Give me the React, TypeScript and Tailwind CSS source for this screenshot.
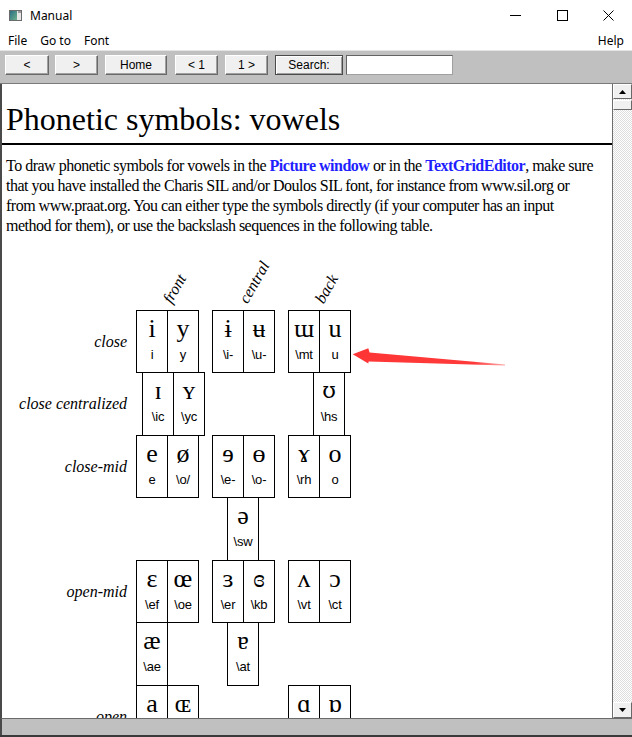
import React from 'react';

const SERIF = "font-['Liberation_Serif','DejaVu_Serif',serif]";

type CellData = [string, string];
type Group = { ml: string; cells: CellData[] } | null;
type RowData = { label: string; h: string; groups: Group[] };

const ROWS: RowData[] = [
  {
    label: 'close',
    h: 'h-[63px]',
    groups: [
      { ml: '', cells: [['i', 'i'], ['y', 'y']] },
      { ml: '', cells: [['ɨ', '\\i-'], ['ʉ', '\\u-']] },
      { ml: '', cells: [['ɯ', '\\mt'], ['u', 'u']] },
    ],
  },
  {
    label: 'close centralized',
    h: 'h-[64px]',
    groups: [
      { ml: 'ml-[6px]', cells: [['ɪ', '\\ic'], ['ʏ', '\\yc']] },
      null,
      { ml: 'ml-[25px]', cells: [['ʊ', '\\hs']] },
    ],
  },
  {
    label: 'close-mid',
    h: 'h-[63px]',
    groups: [
      { ml: '', cells: [['e', 'e'], ['ø', '\\o/']] },
      { ml: '', cells: [['ɘ', '\\e-'], ['ɵ', '\\o-']] },
      { ml: '', cells: [['ɤ', '\\rh'], ['o', 'o']] },
    ],
  },
  {
    label: '',
    h: 'h-[64px]',
    groups: [null, { ml: 'ml-[15px]', cells: [['ə', '\\sw']] }, null],
  },
  {
    label: 'open-mid',
    h: 'h-[63px]',
    groups: [
      { ml: '', cells: [['ɛ', '\\ef'], ['œ', '\\oe']] },
      { ml: '', cells: [['ɜ', '\\er'], ['ɞ', '\\kb']] },
      { ml: '', cells: [['ʌ', '\\vt'], ['ɔ', '\\ct']] },
    ],
  },
  {
    label: '',
    h: 'h-[64px]',
    groups: [
      { ml: '', cells: [['æ', '\\ae']] },
      { ml: 'ml-[15px]', cells: [['ɐ', '\\at']] },
      null,
    ],
  },
  {
    label: 'open',
    h: 'h-[63px]',
    groups: [
      { ml: '', cells: [['a', 'a'], ['ɶ', '\\Oe']] },
      null,
      { ml: '', cells: [['ɑ', '\\as'], ['ɒ', '\\ab']] },
    ],
  },
];

function Cell({ sym, code }: { sym: string; code: string }) {
  const font = sym === 'ʊ' ? "font-['DejaVu_Serif',serif] text-[22px]" : `${SERIF} text-[26px]`;
  return (
    <div className="w-[32px] h-full -ml-px first:ml-0 border border-black flex flex-col items-center">
      <div className={`mt-[3px] leading-[30px] text-black ${font}`}>{sym}</div>
      <div className="mt-[3px] text-[13px] leading-[15px] tracking-[-0.2px] text-black font-['Liberation_Sans',sans-serif]">{code}</div>
    </div>
  );
}

function ToolButton({ w, ml, children }: { w: string; ml: string; children: React.ReactNode }) {
  return (
    <div
      className={`${w} ${ml} h-[20px] shrink-0 bg-[#f0f0f0] border border-t-white border-l-white border-r-[#696969] border-b-[#696969] shadow-[inset_-1px_-1px_0_#a0a0a0] flex items-center justify-center text-[12px] text-black font-['Liberation_Sans',sans-serif]`}
    >
      {children}
    </div>
  );
}

function Arrow({ up }: { up: boolean }) {
  return (
    <svg width="7" height="4" viewBox="0 0 7 4">
      {up ? <path d="M3.5 0 L7 4 L0 4 Z" fill="#000" /> : <path d="M0 0 L7 0 L3.5 4 Z" fill="#000" />}
    </svg>
  );
}

export default function App() {
  return (
    <div className="relative w-[632px] h-[737px] overflow-hidden bg-white flex flex-col">
      {/* title bar */}
      <div className="h-[30px] shrink-0 flex items-center font-['Noto_Sans',sans-serif] text-[12px] text-black">
        <svg width="13" height="11" viewBox="0 0 13 11" className="ml-[9px]">
          <defs>
            <linearGradient id="ic" x1="0" y1="0" x2="1" y2="1">
              <stop offset="0" stopColor="#2b6f86" />
              <stop offset="1" stopColor="#6fb08a" />
            </linearGradient>
          </defs>
          <rect x="0.5" y="0.5" width="12" height="10" fill="#e6e6e6" stroke="#6b6b6b" />
          <rect x="1" y="1" width="7" height="9" fill="url(#ic)" />
          <rect x="9" y="1" width="3" height="2" fill="#9a9a9a" />
        </svg>
        <span className="ml-[8px] mt-px">Manual</span>
        <div className="ml-auto flex items-center">
          <svg width="11" height="11" viewBox="0 0 11 11" className="mr-[36px]">
            <path d="M0 5.5 H11" stroke="#000" strokeWidth="1" />
          </svg>
          <svg width="11" height="11" viewBox="0 0 11 11" className="mr-[35px]">
            <rect x="0.5" y="0.5" width="10" height="10" fill="none" stroke="#000" />
          </svg>
          <svg width="11" height="11" viewBox="0 0 11 11" className="mr-[18px]">
            <path d="M0.5 0.5 L10.5 10.5 M10.5 0.5 L0.5 10.5" stroke="#000" strokeWidth="1" />
          </svg>
        </div>
      </div>

      {/* menu bar */}
      <div className="h-[20px] shrink-0 flex items-center pt-px font-['Noto_Sans',sans-serif] text-[12px] text-black">
        <span className="ml-[8px]">File</span>
        <span className="ml-[13px]">Go to</span>
        <span className="ml-[13px]">Font</span>
        <span className="ml-auto mr-[8px]">Help</span>
      </div>

      {/* toolbar */}
      <div className="h-[34px] shrink-0 bg-[#c0c0c0] border-t border-[#e4e4e4] border-b border-b-[#7a7a7a] flex items-start pt-[4px]">
        <ToolButton w="w-[44px]" ml="ml-[5px]">&lt;</ToolButton>
        <ToolButton w="w-[43px]" ml="ml-[6px]">&gt;</ToolButton>
        <ToolButton w="w-[62px]" ml="ml-[7px]">Home</ToolButton>
        <ToolButton w="w-[43px]" ml="ml-[8px]">&lt; 1</ToolButton>
        <ToolButton w="w-[43px]" ml="ml-[7px]">1 &gt;</ToolButton>
        <div className="ml-[7px] w-[68px] h-[20px] shrink-0 border border-[#4a4a4a] bg-[#f0f0f0] shadow-[inset_1px_1px_0_#fff,inset_-1px_-1px_0_#a0a0a0] flex items-center justify-center text-[12px] text-black font-['Liberation_Sans',sans-serif]">
          Search:
        </div>
        <div className="ml-[3px] w-[107px] h-[20px] shrink-0 bg-white border border-[#646464] border-b-[#a0a0a0] border-r-[#a0a0a0]" />
      </div>

      {/* content */}
      <div className="h-[634px] shrink-0 flex border-l-2 border-[#4a4a4a]">
        <div className="flex-1 overflow-hidden bg-white">
          <h1 className={`ml-[4px] mt-[17px] text-[32px] leading-[36px] text-black whitespace-nowrap ${SERIF}`}>
            Phonetic symbols: vowels
          </h1>
          <div className="mt-[6px] h-[2px] bg-black" />
          <p className={`ml-[4px] mt-[11px] text-[16px] leading-[20px] tracking-[-0.5px] text-black whitespace-nowrap ${SERIF}`}>
            To draw phonetic symbols for vowels in the <b className="text-[#1f1fff]">Picture window</b> or in the{' '}
            <b className="text-[#1f1fff]">TextGridEditor</b>, make sure
            <br />
            that you have installed the Charis SIL and/or Doulos SIL font, for instance from www.sil.org or
            <br />
            from www.praat.org. You can either type the symbols directly (if your computer has an input
            <br />
            method for them), or use the backslash sequences in the following table.
          </p>

          {/* column headers */}
          <div className="flex h-[74px]">
            <div className="w-[134px] shrink-0" />
            {['front', 'central', 'back'].map((t) => (
              <div key={t} className="relative w-[76px] shrink-0">
                <span
                  className={`absolute left-[38px] bottom-[4px] origin-bottom-left -rotate-[60deg] italic text-[16px] leading-none whitespace-nowrap text-black ${SERIF}`}
                >
                  {t}
                </span>
              </div>
            ))}
          </div>

          {/* table */}
          <div className="flex flex-col">
            {ROWS.map((row, i) => (
              <div key={i} className={`flex ${row.h} ${i === 0 ? '' : '-mt-px'}`}>
                <div
                  className={`w-[134px] shrink-0 flex items-center justify-end pr-[9px] italic text-[16px] text-black whitespace-nowrap ${SERIF}`}
                >
                  {row.label}
                </div>
                {row.groups.map((g, j) => (
                  <div key={j} className="w-[76px] shrink-0 h-full">
                    {g && (
                      <div className={`flex h-full ${g.ml}`}>
                        {g.cells.map(([s, c]) => (
                          <Cell key={s} sym={s} code={c} />
                        ))}
                      </div>
                    )}
                  </div>
                ))}
              </div>
            ))}
          </div>
        </div>

        {/* scrollbar */}
        <div className="w-[20px] shrink-0 border-l border-[#6d6d6d] flex flex-col bg-[repeating-conic-gradient(#dedede_0_25%,#ffffff_0_50%)] bg-[length:2px_2px]">
          <div className="h-[15px] bg-[#f0f0f0] border border-t-white border-l-white border-r-[#696969] border-b-[#696969] flex items-center justify-center">
            <Arrow up />
          </div>
          <div className="h-[10px] mt-px bg-[#f0f0f0] border border-t-white border-l-white border-r-[#696969] border-b-[#696969]" />
          <div className="flex-1" />
          <div className="h-[16px] bg-[#f0f0f0] border border-t-white border-l-white border-r-[#696969] border-b-[#696969] flex items-center justify-center">
            <Arrow up={false} />
          </div>
        </div>
      </div>

      {/* bottom bar */}
      <div className="h-[17px] shrink-0 bg-[#c0c0c0] border-t border-[#6a6a6a] border-l-2 border-l-[#4a4a4a]" />
      <div className="h-[2px] shrink-0 bg-[#3a3a3a]" />

      {/* red annotation arrow */}
      <svg width="160" height="25" viewBox="0 0 160 25" className="absolute left-[350px] top-[345px] pointer-events-none">
        <defs>
          <linearGradient id="ar" x1="0" y1="0" x2="1" y2="0">
            <stop offset="0" stopColor="#ff3535" />
            <stop offset="0.8" stopColor="#ff3a3a" />
            <stop offset="1" stopColor="#ff6a6a" stopOpacity="0.6" />
          </linearGradient>
        </defs>
        <path
          d="M2.7 9.3 L18.3 3.3 L19.6 7.4 L155 19.4 L155 20.6 L18.6 16.6 L18.3 18.6 Z"
          fill="url(#ar)"
        />
      </svg>
    </div>
  );
}
